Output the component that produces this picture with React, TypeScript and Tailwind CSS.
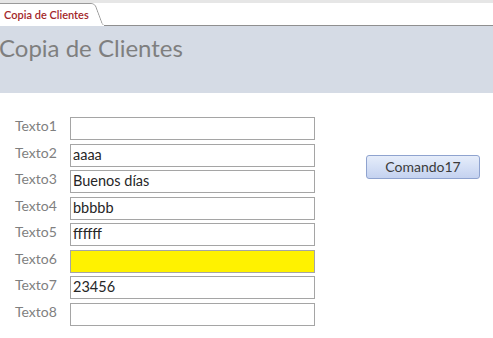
import React from "react";

const rows = [
  { label: "Texto1", value: "" },
  { label: "Texto2", value: "aaaa" },
  { label: "Texto3", value: "Buenos días" },
  { label: "Texto4", value: "bbbbb" },
  { label: "Texto5", value: "ffffff" },
  { label: "Texto6", value: "", highlight: true },
  { label: "Texto7", value: "23456" },
  { label: "Texto8", value: "" },
];

function DocTab() {
  return (
    <div className="relative h-[23px] w-[104px] shrink-0">
      <svg
        className="absolute inset-0"
        width="104"
        height="23"
        viewBox="0 0 104 23"
      >
        <path
          d="M0 0.5 H91 Q94 0.5 95.5 3 L102 20.5 Q103 22.5 104 22.5"
          fill="none"
          stroke="#9a9a9a"
          strokeWidth="1"
        />
        <path d="M0 1 H91 Q93.5 1 95 3.5 L101.5 20.5 Q102.5 22 104 22 V23 H0 Z" fill="#ffffff" />
      </svg>
      <span className="relative block pl-[4px] pt-[5px] text-[11px] leading-[14px] font-semibold text-[#a3262a]">
        Copia de Clientes
      </span>
    </div>
  );
}

export default function App() {
  return (
    <div className="w-[493px] h-[338px] bg-white overflow-hidden font-['Lato','Liberation_Sans',sans-serif]">
      <div className="h-[3px] bg-[#e6e6e6]" />
      <div className="flex h-[23px]">
        <DocTab />
        <div className="flex-1 border-b border-[#8f8f8f]" />
      </div>
      <div className="h-[67px] bg-[#d5dbe5] pt-[7px]">
        <h1 className="text-[24px] leading-[30px] text-[#7f7f7f] -ml-[1px]">
          Copia de Clientes
        </h1>
      </div>
      <div className="flex pt-[24px]">
        <div className="flex flex-col gap-[3.57px] pl-[15px]">
          {rows.map((r) => (
            <div key={r.label} className="flex h-[23px]">
              <span className="w-[55px] text-[14px] leading-[18px] text-[#7f7f7f]">
                {r.label}
              </span>
              <div
                className={
                  "w-[245px] h-[23px] border border-[#a5a5a5] pl-[2px] text-[14.5px] leading-[20px] text-[#262626] " +
                  (r.highlight ? "bg-[#fff200]" : "bg-white")
                }
              >
                {r.value}
              </div>
            </div>
          ))}
        </div>
        <div className="pl-[51px] pt-[37px]">
          <button className="w-[114px] h-[24px] rounded-[3px] border border-[#8fa3cf] bg-gradient-to-b from-[#e6edfa] to-[#c4d2f0] text-[14px] leading-[20px] text-[#3b3b3b]">
            Comando17
          </button>
        </div>
      </div>
    </div>
  );
}
